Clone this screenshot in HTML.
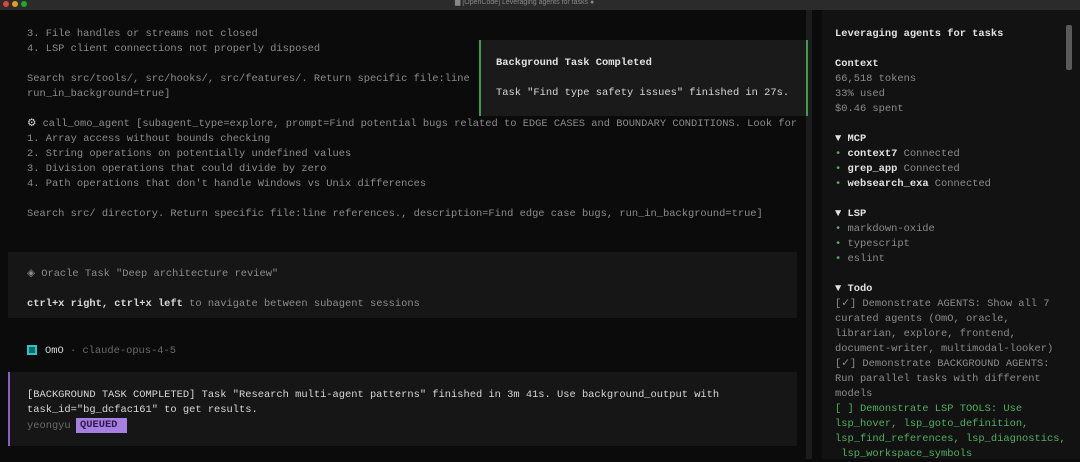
<!DOCTYPE html>
<html><head><meta charset="utf-8"><style>
*{margin:0;padding:0;box-sizing:border-box}
body{width:1080px;height:459px;overflow:hidden;background:#0b0b0b;font-family:"Liberation Mono",monospace;font-size:10.4px;color:#8c8c8c;position:relative}
.t{position:absolute;white-space:pre;line-height:15px}
.b{color:#e2e2e2;font-weight:bold}
.w{color:#d8d8d8}
.g{color:#4fb060}
.d{color:#6a6a6a}
</style></head><body>
<div style="position:absolute;left:0;top:0;width:1080px;height:10px;background:#2b2b2b"></div>
<div style="position:absolute;left:3px;top:1px;width:6px;height:6px;border-radius:50%;background:#e0443e"></div>
<div style="position:absolute;left:12px;top:1px;width:6px;height:6px;border-radius:50%;background:#dea123"></div>
<div style="position:absolute;left:21px;top:1px;width:6px;height:6px;border-radius:50%;background:#1aab29"></div>
<div class="t" style="left:455px;top:-5px;font-size:7px;color:#888;font-family:'Liberation Sans',sans-serif">▇ [OpenCode] Leveraging agents for tasks ●</div>

<div class="t" style="left:27px;top:27px">3. File handles or streams not closed
4. LSP client connections not properly disposed

Search src/tools/, src/hooks/, src/features/. Return specific file:line
run_in_background=true]

<span class="w">⚙</span> call_omo_agent [subagent_type=explore, prompt=Find potential bugs related to EDGE CASES and BOUNDARY CONDITIONS. Look for
1. Array access without bounds checking
2. String operations on potentially undefined values
3. Division operations that could divide by zero
4. Path operations that don't handle Windows vs Unix differences

Search src/ directory. Return specific file:line references., description=Find edge case bugs, run_in_background=true]</div>

<div style="position:absolute;left:806px;top:10px;width:6px;height:449px;background:#1c1c1c"></div>

<div style="position:absolute;left:479px;top:40px;width:329px;height:76px;background:#1a1a1a;border-left:2px solid #3e9b55;border-right:2px solid #3e9b55"></div>
<div class="t b" style="left:496px;top:56px">Background Task Completed</div>
<div class="t w" style="left:496px;top:86px">Task "Find type safety issues" finished in 27s.</div>

<div style="position:absolute;left:8px;top:252px;width:789px;height:66px;background:#161616"></div>
<div class="t" style="left:27px;top:267px">◈ Oracle Task "Deep architecture review"

<span class="w" style="font-weight:bold">ctrl+x right, ctrl+x left</span> to navigate between subagent sessions</div>

<div style="position:absolute;left:27px;top:345px;width:10px;height:10px;background:#0e6b6b;border:2px solid #2cc3c3"></div>
<div class="t" style="left:45px;top:344px"><span class="w">OmO</span> <span class="d">· claude-opus-4-5</span></div>

<div style="position:absolute;left:8px;top:372px;width:789px;height:74px;background:#161616;border-left:2px solid #8a5fc4"></div>
<div class="t w" style="left:27px;top:388px">[BACKGROUND TASK COMPLETED] Task "Research multi-agent patterns" finished in 3m 41s. Use background_output with
task_id="bg_dcfac161" to get results.</div>
<div class="t d" style="left:27px;top:419px">yeongyu</div>
<div style="position:absolute;left:76px;top:418px;width:51px;height:15px;background:#a67fe0"></div>
<div class="t" style="left:80px;top:418px;color:#2c1a4a;font-weight:bold">QUEUED</div>

<div style="position:absolute;left:822px;top:10px;width:258px;height:449px;background:#121212"></div>
<div style="position:absolute;left:1066px;top:25px;width:6px;height:45px;background:#5a5a5a;border-radius:2px"></div>
<div class="t" style="left:835px;top:27px"><span class="b">Leveraging agents for tasks</span>

<span class="b">Context</span>
66,518 tokens
33% used
$0.46 spent

<span class="b">▼ MCP</span>
<span class="g">•</span> <span class="b">context7</span> Connected
<span class="g">•</span> <span class="b">grep_app</span> Connected
<span class="g">•</span> <span class="b">websearch_exa</span> Connected

<span class="b">▼ LSP</span>
<span class="g">•</span> markdown-oxide
<span class="g">•</span> typescript
<span class="g">•</span> eslint

<span class="b">▼ Todo</span>
[✓] Demonstrate AGENTS: Show all 7
curated agents (OmO, oracle,
librarian, explore, frontend,
document-writer, multimodal-looker)
[✓] Demonstrate BACKGROUND AGENTS:
Run parallel tasks with different
models
<span class="g">[ ] Demonstrate LSP TOOLS: Use
lsp_hover, lsp_goto_definition,
lsp_find_references, lsp_diagnostics,
 lsp_workspace_symbols</span></div>
</body></html>
